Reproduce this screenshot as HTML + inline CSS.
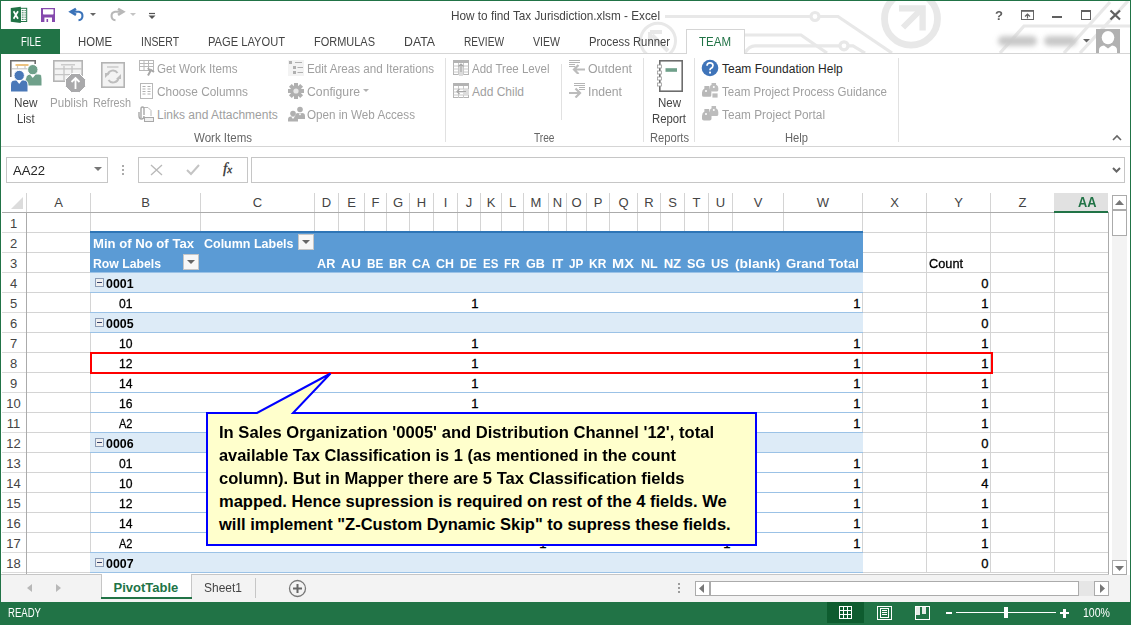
<!DOCTYPE html><html><head><meta charset="utf-8"><style>
html,body{margin:0;padding:0;}
body{width:1131px;height:625px;overflow:hidden;position:relative;background:#fff;font-family:"Liberation Sans",sans-serif;}
body>div{position:absolute;box-sizing:content-box;}
</style></head><body>
<svg style="position:absolute;left:620px;top:0px;" width="510" height="54" viewBox="0 0 510 54">
<g stroke="#e8e8e8" stroke-width="3.2" fill="none">
<path d="M45,16.5 L191,16.5"/><circle cx="195" cy="16.5" r="4"/><path d="M199,16.5 L218,16.5 L272,53"/>
<path d="M124,35 L181,35 L207,53"/>
<path d="M125,53 Q129,45.8 135,45.8 L220,45.8"/><circle cx="224" cy="45.8" r="4"/><path d="M228,45.8 L233,45.8 L245,53"/>
<circle cx="38" cy="40.8" r="17.5" stroke-width="3"/>
<path d="M48,51 L32,35 M30,32 L42,32 M30,32 L30,44" stroke-width="4"/>
<circle cx="291" cy="18.7" r="26.5" stroke-width="6.8"/>
<path d="M283,27.5 L302,8.5" stroke-width="6"/>
<path d="M279,8.3 L302.6,8.3 L302.6,30.5" stroke-width="6.3"/>
<path d="M380,53 L404,26 L510,26"/>
<path d="M444,53 L490,2"/><path d="M460,53 L508,1"/>
</g></svg>
<div style="left:0px;top:0px;width:1131px;height:1px;background:#217346;"></div>
<div style="left:0px;top:0px;width:1px;height:602px;background:#217346;"></div>
<div style="left:1130px;top:0px;width:1px;height:602px;background:#217346;"></div>
<div style="left:451.00px;top:9px;font-size:13px;line-height:13px;font-weight:normal;color:#444;white-space:nowrap;transform:scaleX(0.9050);transform-origin:0 0;">How to find Tax Jurisdiction.xlsm - Excel</div>
<svg style="position:absolute;left:10px;top:6px;" width="19" height="18" viewBox="0 0 19 18"><rect x="10.5" y="2.3" width="6.2" height="13.2" fill="#fff" stroke="#217346" stroke-width="1"/>
<path d="M11.8,4.6 H13.6 M14.5,4.6 H15.8 M11.8,6.8 H13.6 M14.5,6.8 H15.8 M11.8,9 H13.6 M14.5,9 H15.8 M11.8,11.2 H13.6 M14.5,11.2 H15.8 M11.8,13.4 H13.6 M14.5,13.4 H15.8" stroke="#217346" stroke-width="0.9"/>
<path d="M0.8,2 L10.8,0.8 L10.8,17 L0.8,15.8 Z" fill="#217346"/>
<path d="M3.6,5.2 L8,12.8 M8,5.2 L3.6,12.8" stroke="#fff" stroke-width="1.7"/></svg>
<svg style="position:absolute;left:41px;top:8px;" width="15" height="15" viewBox="0 0 15 15"><rect x="0" y="0" width="14" height="14" fill="#8549ad"/><path d="M2,1.3 H12.5 V5.8 Q12.5,6.5 11.8,6.5 H2.7 Q2,6.5 2,5.8 Z" fill="#fff"/><rect x="3.4" y="9.5" width="7.6" height="4.5" fill="#fff"/><rect x="5.5" y="11" width="1.6" height="3" fill="#8549ad"/></svg>
<svg style="position:absolute;left:66px;top:4px;" width="20" height="20" viewBox="0 0 20 20"><path d="M10,4.8 L4.9,7.8 L10,10.9" stroke="#3b73b9" stroke-width="2.7" fill="none" stroke-linejoin="miter"/><path d="M5.5,7.8 H13 A4.3,4.3 0 0 1 12.5,16.3" stroke="#3b73b9" stroke-width="2.1" fill="none"/></svg>
<svg style="position:absolute;left:90px;top:13px;" width="6" height="4" viewBox="0 0 6 4"><polygon points="0,0 6,0 3,3" fill="#666"/></svg>
<svg style="position:absolute;left:106px;top:4px;" width="20" height="20" viewBox="0 0 20 20"><path d="M12,4.8 L17.1,7.8 L12,10.9" stroke="#b8b8b8" stroke-width="2.7" fill="none"/><path d="M16.5,7.8 H9 A4.3,4.3 0 0 0 9.5,16.3" stroke="#b8b8b8" stroke-width="2.1" fill="none"/></svg>
<svg style="position:absolute;left:130px;top:13px;" width="6" height="4" viewBox="0 0 6 4"><polygon points="0,0 6,0 3,3" fill="#c4c4c4"/></svg>
<svg style="position:absolute;left:148px;top:12px;" width="8" height="8" viewBox="0 0 8 8"><path d="M1,1.5 H7" stroke="#555" stroke-width="1.2"/><polygon points="0.5,3.5 7.5,3.5 4,7" fill="#555"/></svg>
<div style="left:994.50px;top:9px;font-size:13px;line-height:13px;font-weight:bold;color:#606060;white-space:nowrap;transform:scaleX(1.0075);transform-origin:0 0;">?</div>
<svg style="position:absolute;left:1020px;top:9px;" width="15" height="12" viewBox="0 0 15 12"><rect x="1.5" y="1.5" width="12" height="9" stroke="#666" fill="none"/><path d="M1,2 H14" stroke="#666" stroke-width="1.6"/><path d="M7.5,9.5 V5 M5,7.5 L7.5,5 L10,7.5" stroke="#666" stroke-width="1.2" fill="none"/></svg>
<div style="left:1052px;top:16px;width:10px;height:2px;background:#606060;"></div>
<svg style="position:absolute;left:1080px;top:9px;" width="12" height="12" viewBox="0 0 12 12"><rect x="1.5" y="1.5" width="9" height="9" stroke="#606060" fill="none"/><rect x="1" y="1" width="10" height="2" fill="#606060"/></svg>
<svg style="position:absolute;left:1109px;top:9px;" width="13" height="12" viewBox="0 0 13 12"><path d="M1.5,1.5 L11,10.5 M11,1.5 L1.5,10.5" stroke="#606060" stroke-width="2.2"/></svg>
<div style="left:998px;top:36px;width:39px;height:10px;background:#c8c8c8;border-radius:5px;filter:blur(2.5px)"></div>
<div style="left:1044px;top:36px;width:33px;height:10px;background:#c8c8c8;border-radius:5px;filter:blur(2.5px)"></div>
<svg style="position:absolute;left:1083px;top:39px;" width="7" height="4" viewBox="0 0 7 4"><polygon points="0,0 7,0 3.5,3.5" fill="#666"/></svg>
<svg style="position:absolute;left:1096px;top:29px;" width="24" height="25" viewBox="0 0 24 25"><rect width="24" height="25" fill="#b1b1b1"/><ellipse cx="12" cy="8.6" rx="6.3" ry="6.6" fill="#fff"/><path d="M3,25 V21 Q3,17 8,16.5 L12,19.5 L16,16.5 Q21,17 21,21 V25 Z" fill="#fff"/></svg>
<div style="left:686px;top:29px;width:57px;height:24px;border:1px solid #d5d5d5;background:#fff;border-bottom:none;"></div>
<div style="left:90px;top:213px;width:1px;height:360px;background:#d4d4d4;"></div>
<div style="left:200px;top:213px;width:1px;height:360px;background:#d4d4d4;"></div>
<div style="left:314px;top:213px;width:1px;height:360px;background:#d4d4d4;"></div>
<div style="left:338px;top:213px;width:1px;height:360px;background:#d4d4d4;"></div>
<div style="left:364px;top:213px;width:1px;height:360px;background:#d4d4d4;"></div>
<div style="left:386px;top:213px;width:1px;height:360px;background:#d4d4d4;"></div>
<div style="left:409px;top:213px;width:1px;height:360px;background:#d4d4d4;"></div>
<div style="left:433px;top:213px;width:1px;height:360px;background:#d4d4d4;"></div>
<div style="left:457px;top:213px;width:1px;height:360px;background:#d4d4d4;"></div>
<div style="left:480px;top:213px;width:1px;height:360px;background:#d4d4d4;"></div>
<div style="left:501px;top:213px;width:1px;height:360px;background:#d4d4d4;"></div>
<div style="left:523px;top:213px;width:1px;height:360px;background:#d4d4d4;"></div>
<div style="left:548px;top:213px;width:1px;height:360px;background:#d4d4d4;"></div>
<div style="left:566px;top:213px;width:1px;height:360px;background:#d4d4d4;"></div>
<div style="left:586px;top:213px;width:1px;height:360px;background:#d4d4d4;"></div>
<div style="left:609px;top:213px;width:1px;height:360px;background:#d4d4d4;"></div>
<div style="left:637px;top:213px;width:1px;height:360px;background:#d4d4d4;"></div>
<div style="left:660px;top:213px;width:1px;height:360px;background:#d4d4d4;"></div>
<div style="left:684px;top:213px;width:1px;height:360px;background:#d4d4d4;"></div>
<div style="left:708px;top:213px;width:1px;height:360px;background:#d4d4d4;"></div>
<div style="left:732px;top:213px;width:1px;height:360px;background:#d4d4d4;"></div>
<div style="left:783px;top:213px;width:1px;height:360px;background:#d4d4d4;"></div>
<div style="left:862px;top:213px;width:1px;height:360px;background:#d4d4d4;"></div>
<div style="left:926px;top:213px;width:1px;height:360px;background:#d4d4d4;"></div>
<div style="left:990px;top:213px;width:1px;height:360px;background:#d4d4d4;"></div>
<div style="left:1054px;top:213px;width:1px;height:360px;background:#d4d4d4;"></div>
<div style="left:1108px;top:213px;width:1px;height:360px;background:#d4d4d4;"></div>
<div style="left:27px;top:232px;width:1082px;height:1px;background:#d4d4d4;"></div>
<div style="left:2px;top:232px;width:24px;height:1px;background:#dcdcdc;"></div>
<div style="left:27px;top:252px;width:1082px;height:1px;background:#d4d4d4;"></div>
<div style="left:2px;top:252px;width:24px;height:1px;background:#dcdcdc;"></div>
<div style="left:27px;top:272px;width:1082px;height:1px;background:#d4d4d4;"></div>
<div style="left:2px;top:272px;width:24px;height:1px;background:#dcdcdc;"></div>
<div style="left:27px;top:292px;width:1082px;height:1px;background:#d4d4d4;"></div>
<div style="left:2px;top:292px;width:24px;height:1px;background:#dcdcdc;"></div>
<div style="left:27px;top:312px;width:1082px;height:1px;background:#d4d4d4;"></div>
<div style="left:2px;top:312px;width:24px;height:1px;background:#dcdcdc;"></div>
<div style="left:27px;top:332px;width:1082px;height:1px;background:#d4d4d4;"></div>
<div style="left:2px;top:332px;width:24px;height:1px;background:#dcdcdc;"></div>
<div style="left:27px;top:352px;width:1082px;height:1px;background:#d4d4d4;"></div>
<div style="left:2px;top:352px;width:24px;height:1px;background:#dcdcdc;"></div>
<div style="left:27px;top:372px;width:1082px;height:1px;background:#d4d4d4;"></div>
<div style="left:2px;top:372px;width:24px;height:1px;background:#dcdcdc;"></div>
<div style="left:27px;top:392px;width:1082px;height:1px;background:#d4d4d4;"></div>
<div style="left:2px;top:392px;width:24px;height:1px;background:#dcdcdc;"></div>
<div style="left:27px;top:412px;width:1082px;height:1px;background:#d4d4d4;"></div>
<div style="left:2px;top:412px;width:24px;height:1px;background:#dcdcdc;"></div>
<div style="left:27px;top:432px;width:1082px;height:1px;background:#d4d4d4;"></div>
<div style="left:2px;top:432px;width:24px;height:1px;background:#dcdcdc;"></div>
<div style="left:27px;top:452px;width:1082px;height:1px;background:#d4d4d4;"></div>
<div style="left:2px;top:452px;width:24px;height:1px;background:#dcdcdc;"></div>
<div style="left:27px;top:472px;width:1082px;height:1px;background:#d4d4d4;"></div>
<div style="left:2px;top:472px;width:24px;height:1px;background:#dcdcdc;"></div>
<div style="left:27px;top:492px;width:1082px;height:1px;background:#d4d4d4;"></div>
<div style="left:2px;top:492px;width:24px;height:1px;background:#dcdcdc;"></div>
<div style="left:27px;top:512px;width:1082px;height:1px;background:#d4d4d4;"></div>
<div style="left:2px;top:512px;width:24px;height:1px;background:#dcdcdc;"></div>
<div style="left:27px;top:532px;width:1082px;height:1px;background:#d4d4d4;"></div>
<div style="left:2px;top:532px;width:24px;height:1px;background:#dcdcdc;"></div>
<div style="left:27px;top:552px;width:1082px;height:1px;background:#d4d4d4;"></div>
<div style="left:2px;top:552px;width:24px;height:1px;background:#dcdcdc;"></div>
<div style="left:27px;top:572px;width:1082px;height:1px;background:#d4d4d4;"></div>
<div style="left:2px;top:572px;width:24px;height:1px;background:#dcdcdc;"></div>
<div style="left:90px;top:193px;width:1px;height:19px;background:#d4d4d4;"></div>
<div style="left:200px;top:193px;width:1px;height:19px;background:#d4d4d4;"></div>
<div style="left:314px;top:193px;width:1px;height:19px;background:#d4d4d4;"></div>
<div style="left:338px;top:193px;width:1px;height:19px;background:#d4d4d4;"></div>
<div style="left:364px;top:193px;width:1px;height:19px;background:#d4d4d4;"></div>
<div style="left:386px;top:193px;width:1px;height:19px;background:#d4d4d4;"></div>
<div style="left:409px;top:193px;width:1px;height:19px;background:#d4d4d4;"></div>
<div style="left:433px;top:193px;width:1px;height:19px;background:#d4d4d4;"></div>
<div style="left:457px;top:193px;width:1px;height:19px;background:#d4d4d4;"></div>
<div style="left:480px;top:193px;width:1px;height:19px;background:#d4d4d4;"></div>
<div style="left:501px;top:193px;width:1px;height:19px;background:#d4d4d4;"></div>
<div style="left:523px;top:193px;width:1px;height:19px;background:#d4d4d4;"></div>
<div style="left:548px;top:193px;width:1px;height:19px;background:#d4d4d4;"></div>
<div style="left:566px;top:193px;width:1px;height:19px;background:#d4d4d4;"></div>
<div style="left:586px;top:193px;width:1px;height:19px;background:#d4d4d4;"></div>
<div style="left:609px;top:193px;width:1px;height:19px;background:#d4d4d4;"></div>
<div style="left:637px;top:193px;width:1px;height:19px;background:#d4d4d4;"></div>
<div style="left:660px;top:193px;width:1px;height:19px;background:#d4d4d4;"></div>
<div style="left:684px;top:193px;width:1px;height:19px;background:#d4d4d4;"></div>
<div style="left:708px;top:193px;width:1px;height:19px;background:#d4d4d4;"></div>
<div style="left:732px;top:193px;width:1px;height:19px;background:#d4d4d4;"></div>
<div style="left:783px;top:193px;width:1px;height:19px;background:#d4d4d4;"></div>
<div style="left:862px;top:193px;width:1px;height:19px;background:#d4d4d4;"></div>
<div style="left:926px;top:193px;width:1px;height:19px;background:#d4d4d4;"></div>
<div style="left:990px;top:193px;width:1px;height:19px;background:#d4d4d4;"></div>
<div style="left:1054px;top:193px;width:1px;height:19px;background:#d4d4d4;"></div>
<div style="left:1054px;top:193px;width:54px;height:18px;background:#e1e1e1;"></div>
<div style="left:1054px;top:211px;width:54px;height:2px;background:#217346;"></div>
<div style="left:2px;top:212px;width:1052px;height:1px;background:#ababab;"></div>
<div style="left:26px;top:213px;width:1px;height:361px;background:#ababab;"></div>
<svg style="position:absolute;left:11px;top:197px;" width="13" height="12" viewBox="0 0 13 12"><polygon points="12,0 12,12 0,12" fill="#dcdcdc"/></svg>
<div style="left:26px;top:193px;width:1px;height:19px;background:#d4d4d4;"></div>
<div style="left:54.16px;top:196px;font-size:13px;line-height:13px;font-weight:normal;color:#444;white-space:nowrap;">A</div>
<div style="left:141.16px;top:196px;font-size:13px;line-height:13px;font-weight:normal;color:#444;white-space:nowrap;">B</div>
<div style="left:252.81px;top:196px;font-size:13px;line-height:13px;font-weight:normal;color:#444;white-space:nowrap;">C</div>
<div style="left:321.81px;top:196px;font-size:13px;line-height:13px;font-weight:normal;color:#444;white-space:nowrap;">D</div>
<div style="left:347.16px;top:196px;font-size:13px;line-height:13px;font-weight:normal;color:#444;white-space:nowrap;">E</div>
<div style="left:371.53px;top:196px;font-size:13px;line-height:13px;font-weight:normal;color:#444;white-space:nowrap;">F</div>
<div style="left:392.94px;top:196px;font-size:13px;line-height:13px;font-weight:normal;color:#444;white-space:nowrap;">G</div>
<div style="left:416.81px;top:196px;font-size:13px;line-height:13px;font-weight:normal;color:#444;white-space:nowrap;">H</div>
<div style="left:443.69px;top:196px;font-size:13px;line-height:13px;font-weight:normal;color:#444;white-space:nowrap;">I</div>
<div style="left:465.75px;top:196px;font-size:13px;line-height:13px;font-weight:normal;color:#444;white-space:nowrap;">J</div>
<div style="left:486.66px;top:196px;font-size:13px;line-height:13px;font-weight:normal;color:#444;white-space:nowrap;">K</div>
<div style="left:508.89px;top:196px;font-size:13px;line-height:13px;font-weight:normal;color:#444;white-space:nowrap;">L</div>
<div style="left:530.59px;top:196px;font-size:13px;line-height:13px;font-weight:normal;color:#444;white-space:nowrap;">M</div>
<div style="left:552.81px;top:196px;font-size:13px;line-height:13px;font-weight:normal;color:#444;white-space:nowrap;">N</div>
<div style="left:571.44px;top:196px;font-size:13px;line-height:13px;font-weight:normal;color:#444;white-space:nowrap;">O</div>
<div style="left:593.66px;top:196px;font-size:13px;line-height:13px;font-weight:normal;color:#444;white-space:nowrap;">P</div>
<div style="left:618.44px;top:196px;font-size:13px;line-height:13px;font-weight:normal;color:#444;white-space:nowrap;">Q</div>
<div style="left:644.31px;top:196px;font-size:13px;line-height:13px;font-weight:normal;color:#444;white-space:nowrap;">R</div>
<div style="left:668.16px;top:196px;font-size:13px;line-height:13px;font-weight:normal;color:#444;white-space:nowrap;">S</div>
<div style="left:692.53px;top:196px;font-size:13px;line-height:13px;font-weight:normal;color:#444;white-space:nowrap;">T</div>
<div style="left:715.81px;top:196px;font-size:13px;line-height:13px;font-weight:normal;color:#444;white-space:nowrap;">U</div>
<div style="left:753.66px;top:196px;font-size:13px;line-height:13px;font-weight:normal;color:#444;white-space:nowrap;">V</div>
<div style="left:816.86px;top:196px;font-size:13px;line-height:13px;font-weight:normal;color:#444;white-space:nowrap;">W</div>
<div style="left:890.16px;top:196px;font-size:13px;line-height:13px;font-weight:normal;color:#444;white-space:nowrap;">X</div>
<div style="left:954.16px;top:196px;font-size:13px;line-height:13px;font-weight:normal;color:#444;white-space:nowrap;">Y</div>
<div style="left:1018.53px;top:196px;font-size:13px;line-height:13px;font-weight:normal;color:#444;white-space:nowrap;">Z</div>
<div style="left:1078.00px;top:195px;font-size:14px;line-height:14px;font-weight:bold;color:#217346;white-space:nowrap;transform:scaleX(0.9149);transform-origin:0 0;">AA</div>
<div style="left:9.89px;top:217px;font-size:13px;line-height:13px;font-weight:normal;color:#444;white-space:nowrap;">1</div>
<div style="left:9.89px;top:237px;font-size:13px;line-height:13px;font-weight:normal;color:#444;white-space:nowrap;">2</div>
<div style="left:9.89px;top:257px;font-size:13px;line-height:13px;font-weight:normal;color:#444;white-space:nowrap;">3</div>
<div style="left:9.89px;top:277px;font-size:13px;line-height:13px;font-weight:normal;color:#444;white-space:nowrap;">4</div>
<div style="left:9.89px;top:297px;font-size:13px;line-height:13px;font-weight:normal;color:#444;white-space:nowrap;">5</div>
<div style="left:9.89px;top:317px;font-size:13px;line-height:13px;font-weight:normal;color:#444;white-space:nowrap;">6</div>
<div style="left:9.89px;top:337px;font-size:13px;line-height:13px;font-weight:normal;color:#444;white-space:nowrap;">7</div>
<div style="left:9.89px;top:357px;font-size:13px;line-height:13px;font-weight:normal;color:#444;white-space:nowrap;">8</div>
<div style="left:9.89px;top:377px;font-size:13px;line-height:13px;font-weight:normal;color:#444;white-space:nowrap;">9</div>
<div style="left:6.27px;top:397px;font-size:13px;line-height:13px;font-weight:normal;color:#444;white-space:nowrap;">10</div>
<div style="left:6.75px;top:417px;font-size:13px;line-height:13px;font-weight:normal;color:#444;white-space:nowrap;">11</div>
<div style="left:6.27px;top:437px;font-size:13px;line-height:13px;font-weight:normal;color:#444;white-space:nowrap;">12</div>
<div style="left:6.27px;top:457px;font-size:13px;line-height:13px;font-weight:normal;color:#444;white-space:nowrap;">13</div>
<div style="left:6.27px;top:477px;font-size:13px;line-height:13px;font-weight:normal;color:#444;white-space:nowrap;">14</div>
<div style="left:6.27px;top:497px;font-size:13px;line-height:13px;font-weight:normal;color:#444;white-space:nowrap;">15</div>
<div style="left:6.27px;top:517px;font-size:13px;line-height:13px;font-weight:normal;color:#444;white-space:nowrap;">16</div>
<div style="left:6.27px;top:537px;font-size:13px;line-height:13px;font-weight:normal;color:#444;white-space:nowrap;">17</div>
<div style="left:6.27px;top:557px;font-size:13px;line-height:13px;font-weight:normal;color:#444;white-space:nowrap;">18</div>
<div style="left:1px;top:574px;width:1108px;height:1px;background:#c6c6c6;"></div>
<div style="left:90px;top:231px;width:773px;height:2px;background:#2e75b6;"></div>
<div style="left:90px;top:233px;width:773px;height:39px;background:#5b9bd5;"></div>
<div style="left:90px;top:272px;width:773px;height:1px;background:#9bc2e6;"></div>
<div style="left:91px;top:273px;width:771px;height:300px;background:#fff;"></div>
<div style="left:93.00px;top:237px;font-size:13px;line-height:13px;font-weight:bold;color:#fff;white-space:nowrap;transform:scaleX(1.0087);transform-origin:0 0;">Min of No of Tax</div>
<div style="left:203.50px;top:237px;font-size:13px;line-height:13px;font-weight:bold;color:#fff;white-space:nowrap;transform:scaleX(0.9606);transform-origin:0 0;">Column Labels</div>
<div style="left:93.00px;top:257px;font-size:13px;line-height:13px;font-weight:bold;color:#fff;white-space:nowrap;transform:scaleX(0.9414);transform-origin:0 0;">Row Labels</div>
<div style="left:183px;top:254px;width:14px;height:14px;border:1px solid #c6c6c6;background:#f7f7f7;"></div>
<svg style="position:absolute;left:187px;top:260px;" width="8" height="5" viewBox="0 0 8 5"><polygon points="0,0 8,0 4,4" fill="#666"/></svg>
<div style="left:298px;top:234px;width:14px;height:14px;border:1px solid #c6c6c6;background:#f7f7f7;"></div>
<svg style="position:absolute;left:302px;top:240px;" width="8" height="5" viewBox="0 0 8 5"><polygon points="0,0 8,0 4,4" fill="#666"/></svg>
<div style="left:316.70px;top:257px;font-size:13px;line-height:13px;font-weight:bold;color:#fff;white-space:nowrap;transform:scaleX(0.9746);transform-origin:0 0;">AR</div>
<div style="left:340.70px;top:257px;font-size:13px;line-height:13px;font-weight:bold;color:#fff;white-space:nowrap;transform:scaleX(1.0598);transform-origin:0 0;">AU</div>
<div style="left:366.70px;top:257px;font-size:13px;line-height:13px;font-weight:bold;color:#fff;white-space:nowrap;transform:scaleX(0.9026);transform-origin:0 0;">BE</div>
<div style="left:388.70px;top:257px;font-size:13px;line-height:13px;font-weight:bold;color:#fff;white-space:nowrap;transform:scaleX(0.9213);transform-origin:0 0;">BR</div>
<div style="left:411.70px;top:257px;font-size:13px;line-height:13px;font-weight:bold;color:#fff;white-space:nowrap;transform:scaleX(0.9746);transform-origin:0 0;">CA</div>
<div style="left:435.70px;top:257px;font-size:13px;line-height:13px;font-weight:bold;color:#fff;white-space:nowrap;transform:scaleX(0.9533);transform-origin:0 0;">CH</div>
<div style="left:460.30px;top:257px;font-size:13px;line-height:13px;font-weight:bold;color:#fff;white-space:nowrap;transform:scaleX(0.9247);transform-origin:0 0;">DE</div>
<div style="left:483.30px;top:257px;font-size:13px;line-height:13px;font-weight:bold;color:#fff;white-space:nowrap;transform:scaleX(0.8822);transform-origin:0 0;">ES</div>
<div style="left:504.30px;top:257px;font-size:13px;line-height:13px;font-weight:bold;color:#fff;white-space:nowrap;transform:scaleX(0.9060);transform-origin:0 0;">FR</div>
<div style="left:526.10px;top:257px;font-size:13px;line-height:13px;font-weight:bold;color:#fff;white-space:nowrap;transform:scaleX(0.9692);transform-origin:0 0;">GB</div>
<div style="left:551.70px;top:257px;font-size:13px;line-height:13px;font-weight:bold;color:#fff;white-space:nowrap;transform:scaleX(0.9782);transform-origin:0 0;">IT</div>
<div style="left:568.70px;top:257px;font-size:13px;line-height:13px;font-weight:bold;color:#fff;white-space:nowrap;transform:scaleX(0.8993);transform-origin:0 0;">JP</div>
<div style="left:589.30px;top:257px;font-size:13px;line-height:13px;font-weight:bold;color:#fff;white-space:nowrap;transform:scaleX(0.9213);transform-origin:0 0;">KR</div>
<div style="left:612.10px;top:257px;font-size:13px;line-height:13px;font-weight:bold;color:#fff;white-space:nowrap;transform:scaleX(1.1231);transform-origin:0 0;">MX</div>
<div style="left:640.70px;top:257px;font-size:13px;line-height:13px;font-weight:bold;color:#fff;white-space:nowrap;transform:scaleX(0.9637);transform-origin:0 0;">NL</div>
<div style="left:663.70px;top:257px;font-size:13px;line-height:13px;font-weight:bold;color:#fff;white-space:nowrap;">NZ</div>
<div style="left:686.70px;top:257px;font-size:13px;line-height:13px;font-weight:bold;color:#fff;white-space:nowrap;transform:scaleX(0.9743);transform-origin:0 0;">SG</div>
<div style="left:711.30px;top:257px;font-size:13px;line-height:13px;font-weight:bold;color:#fff;white-space:nowrap;transform:scaleX(0.9801);transform-origin:0 0;">US</div>
<div style="left:734.70px;top:257px;font-size:13px;line-height:13px;font-weight:bold;color:#fff;white-space:nowrap;transform:scaleX(1.0632);transform-origin:0 0;">(blank)</div>
<div style="left:786.10px;top:257px;font-size:13px;line-height:13px;font-weight:bold;color:#fff;white-space:nowrap;transform:scaleX(1.0128);transform-origin:0 0;">Grand Total</div>
<div style="left:90px;top:273px;width:773px;height:19px;background:#ddebf7;"></div>
<div style="left:90px;top:292px;width:773px;height:1px;background:#9bc2e6;"></div>
<div style="left:90px;top:312px;width:773px;height:1px;background:#9bc2e6;"></div>
<div style="left:90px;top:313px;width:773px;height:19px;background:#ddebf7;"></div>
<div style="left:90px;top:332px;width:773px;height:1px;background:#9bc2e6;"></div>
<div style="left:90px;top:352px;width:773px;height:1px;background:#9bc2e6;"></div>
<div style="left:90px;top:372px;width:773px;height:1px;background:#9bc2e6;"></div>
<div style="left:90px;top:392px;width:773px;height:1px;background:#9bc2e6;"></div>
<div style="left:90px;top:412px;width:773px;height:1px;background:#9bc2e6;"></div>
<div style="left:90px;top:432px;width:773px;height:1px;background:#9bc2e6;"></div>
<div style="left:90px;top:433px;width:773px;height:19px;background:#ddebf7;"></div>
<div style="left:90px;top:452px;width:773px;height:1px;background:#9bc2e6;"></div>
<div style="left:90px;top:472px;width:773px;height:1px;background:#9bc2e6;"></div>
<div style="left:90px;top:492px;width:773px;height:1px;background:#9bc2e6;"></div>
<div style="left:90px;top:512px;width:773px;height:1px;background:#9bc2e6;"></div>
<div style="left:90px;top:532px;width:773px;height:1px;background:#9bc2e6;"></div>
<div style="left:90px;top:552px;width:773px;height:1px;background:#9bc2e6;"></div>
<div style="left:90px;top:553px;width:773px;height:19px;background:#ddebf7;"></div>
<div style="left:90px;top:572px;width:773px;height:1px;background:#9bc2e6;"></div>
<div style="left:95px;top:278px;width:7px;height:7px;border:1px solid #8a9bb5;background:#f0f0f0;"></div>
<div style="left:97px;top:282px;width:5px;height:1px;background:#33406b;"></div>
<div style="left:106.00px;top:277px;font-size:13px;line-height:13px;font-weight:bold;color:#000;white-space:nowrap;transform:scaleX(0.9510);transform-origin:0 0;">0001</div>
<div style="left:95px;top:318px;width:7px;height:7px;border:1px solid #8a9bb5;background:#f0f0f0;"></div>
<div style="left:97px;top:322px;width:5px;height:1px;background:#33406b;"></div>
<div style="left:106.00px;top:317px;font-size:13px;line-height:13px;font-weight:bold;color:#000;white-space:nowrap;transform:scaleX(0.9510);transform-origin:0 0;">0005</div>
<div style="left:95px;top:438px;width:7px;height:7px;border:1px solid #8a9bb5;background:#f0f0f0;"></div>
<div style="left:97px;top:442px;width:5px;height:1px;background:#33406b;"></div>
<div style="left:106.00px;top:437px;font-size:13px;line-height:13px;font-weight:bold;color:#000;white-space:nowrap;transform:scaleX(0.9510);transform-origin:0 0;">0006</div>
<div style="left:95px;top:558px;width:7px;height:7px;border:1px solid #8a9bb5;background:#f0f0f0;"></div>
<div style="left:97px;top:562px;width:5px;height:1px;background:#33406b;"></div>
<div style="left:106.00px;top:557px;font-size:13px;line-height:13px;font-weight:bold;color:#000;white-space:nowrap;transform:scaleX(0.9510);transform-origin:0 0;">0007</div>
<div style="left:119.00px;top:297px;font-size:13px;line-height:13px;font-weight:normal;color:#000;white-space:nowrap;transform:scaleX(0.9337);transform-origin:0 0;-webkit-text-stroke:0.3px #000;">01</div>
<div style="left:119.00px;top:337px;font-size:13px;line-height:13px;font-weight:normal;color:#000;white-space:nowrap;transform:scaleX(0.9337);transform-origin:0 0;-webkit-text-stroke:0.3px #000;">10</div>
<div style="left:119.00px;top:357px;font-size:13px;line-height:13px;font-weight:normal;color:#000;white-space:nowrap;transform:scaleX(0.9337);transform-origin:0 0;-webkit-text-stroke:0.3px #000;">12</div>
<div style="left:119.00px;top:377px;font-size:13px;line-height:13px;font-weight:normal;color:#000;white-space:nowrap;transform:scaleX(0.9337);transform-origin:0 0;-webkit-text-stroke:0.3px #000;">14</div>
<div style="left:119.00px;top:397px;font-size:13px;line-height:13px;font-weight:normal;color:#000;white-space:nowrap;transform:scaleX(0.9337);transform-origin:0 0;-webkit-text-stroke:0.3px #000;">16</div>
<div style="left:119.00px;top:417px;font-size:13px;line-height:13px;font-weight:normal;color:#000;white-space:nowrap;transform:scaleX(0.8490);transform-origin:0 0;-webkit-text-stroke:0.3px #000;">A2</div>
<div style="left:119.00px;top:457px;font-size:13px;line-height:13px;font-weight:normal;color:#000;white-space:nowrap;transform:scaleX(0.9337);transform-origin:0 0;-webkit-text-stroke:0.3px #000;">01</div>
<div style="left:119.00px;top:477px;font-size:13px;line-height:13px;font-weight:normal;color:#000;white-space:nowrap;transform:scaleX(0.9337);transform-origin:0 0;-webkit-text-stroke:0.3px #000;">10</div>
<div style="left:119.00px;top:497px;font-size:13px;line-height:13px;font-weight:normal;color:#000;white-space:nowrap;transform:scaleX(0.9337);transform-origin:0 0;-webkit-text-stroke:0.3px #000;">12</div>
<div style="left:119.00px;top:517px;font-size:13px;line-height:13px;font-weight:normal;color:#000;white-space:nowrap;transform:scaleX(0.9337);transform-origin:0 0;-webkit-text-stroke:0.3px #000;">14</div>
<div style="left:119.00px;top:537px;font-size:13px;line-height:13px;font-weight:normal;color:#000;white-space:nowrap;transform:scaleX(0.8490);transform-origin:0 0;-webkit-text-stroke:0.3px #000;">A2</div>
<div style="left:471.27px;top:297px;font-size:13px;line-height:13px;font-weight:normal;color:#000;white-space:nowrap;-webkit-text-stroke:0.3px #000;">1</div>
<div style="left:471.27px;top:337px;font-size:13px;line-height:13px;font-weight:normal;color:#000;white-space:nowrap;-webkit-text-stroke:0.3px #000;">1</div>
<div style="left:471.27px;top:357px;font-size:13px;line-height:13px;font-weight:normal;color:#000;white-space:nowrap;-webkit-text-stroke:0.3px #000;">1</div>
<div style="left:471.27px;top:377px;font-size:13px;line-height:13px;font-weight:normal;color:#000;white-space:nowrap;-webkit-text-stroke:0.3px #000;">1</div>
<div style="left:471.27px;top:397px;font-size:13px;line-height:13px;font-weight:normal;color:#000;white-space:nowrap;-webkit-text-stroke:0.3px #000;">1</div>
<div style="left:471.27px;top:417px;font-size:13px;line-height:13px;font-weight:normal;color:#000;white-space:nowrap;-webkit-text-stroke:0.3px #000;">1</div>
<div style="left:853.27px;top:297px;font-size:13px;line-height:13px;font-weight:normal;color:#000;white-space:nowrap;-webkit-text-stroke:0.3px #000;">1</div>
<div style="left:853.27px;top:337px;font-size:13px;line-height:13px;font-weight:normal;color:#000;white-space:nowrap;-webkit-text-stroke:0.3px #000;">1</div>
<div style="left:853.27px;top:357px;font-size:13px;line-height:13px;font-weight:normal;color:#000;white-space:nowrap;-webkit-text-stroke:0.3px #000;">1</div>
<div style="left:853.27px;top:377px;font-size:13px;line-height:13px;font-weight:normal;color:#000;white-space:nowrap;-webkit-text-stroke:0.3px #000;">1</div>
<div style="left:853.27px;top:397px;font-size:13px;line-height:13px;font-weight:normal;color:#000;white-space:nowrap;-webkit-text-stroke:0.3px #000;">1</div>
<div style="left:853.27px;top:417px;font-size:13px;line-height:13px;font-weight:normal;color:#000;white-space:nowrap;-webkit-text-stroke:0.3px #000;">1</div>
<div style="left:853.27px;top:457px;font-size:13px;line-height:13px;font-weight:normal;color:#000;white-space:nowrap;-webkit-text-stroke:0.3px #000;">1</div>
<div style="left:853.27px;top:477px;font-size:13px;line-height:13px;font-weight:normal;color:#000;white-space:nowrap;-webkit-text-stroke:0.3px #000;">1</div>
<div style="left:853.27px;top:497px;font-size:13px;line-height:13px;font-weight:normal;color:#000;white-space:nowrap;-webkit-text-stroke:0.3px #000;">1</div>
<div style="left:853.27px;top:517px;font-size:13px;line-height:13px;font-weight:normal;color:#000;white-space:nowrap;-webkit-text-stroke:0.3px #000;">1</div>
<div style="left:853.27px;top:537px;font-size:13px;line-height:13px;font-weight:normal;color:#000;white-space:nowrap;-webkit-text-stroke:0.3px #000;">1</div>
<div style="left:539.27px;top:537px;font-size:13px;line-height:13px;font-weight:normal;color:#000;white-space:nowrap;-webkit-text-stroke:0.3px #000;">1</div>
<div style="left:723.27px;top:537px;font-size:13px;line-height:13px;font-weight:normal;color:#000;white-space:nowrap;-webkit-text-stroke:0.3px #000;">1</div>
<div style="left:981.27px;top:277px;font-size:13px;line-height:13px;font-weight:normal;color:#000;white-space:nowrap;-webkit-text-stroke:0.3px #000;">0</div>
<div style="left:981.27px;top:297px;font-size:13px;line-height:13px;font-weight:normal;color:#000;white-space:nowrap;-webkit-text-stroke:0.3px #000;">1</div>
<div style="left:981.27px;top:317px;font-size:13px;line-height:13px;font-weight:normal;color:#000;white-space:nowrap;-webkit-text-stroke:0.3px #000;">0</div>
<div style="left:981.27px;top:337px;font-size:13px;line-height:13px;font-weight:normal;color:#000;white-space:nowrap;-webkit-text-stroke:0.3px #000;">1</div>
<div style="left:981.27px;top:357px;font-size:13px;line-height:13px;font-weight:normal;color:#000;white-space:nowrap;-webkit-text-stroke:0.3px #000;">1</div>
<div style="left:981.27px;top:377px;font-size:13px;line-height:13px;font-weight:normal;color:#000;white-space:nowrap;-webkit-text-stroke:0.3px #000;">1</div>
<div style="left:981.27px;top:397px;font-size:13px;line-height:13px;font-weight:normal;color:#000;white-space:nowrap;-webkit-text-stroke:0.3px #000;">1</div>
<div style="left:981.27px;top:417px;font-size:13px;line-height:13px;font-weight:normal;color:#000;white-space:nowrap;-webkit-text-stroke:0.3px #000;">1</div>
<div style="left:981.27px;top:437px;font-size:13px;line-height:13px;font-weight:normal;color:#000;white-space:nowrap;-webkit-text-stroke:0.3px #000;">0</div>
<div style="left:981.27px;top:457px;font-size:13px;line-height:13px;font-weight:normal;color:#000;white-space:nowrap;-webkit-text-stroke:0.3px #000;">1</div>
<div style="left:981.27px;top:477px;font-size:13px;line-height:13px;font-weight:normal;color:#000;white-space:nowrap;-webkit-text-stroke:0.3px #000;">4</div>
<div style="left:981.27px;top:497px;font-size:13px;line-height:13px;font-weight:normal;color:#000;white-space:nowrap;-webkit-text-stroke:0.3px #000;">1</div>
<div style="left:981.27px;top:517px;font-size:13px;line-height:13px;font-weight:normal;color:#000;white-space:nowrap;-webkit-text-stroke:0.3px #000;">1</div>
<div style="left:981.27px;top:537px;font-size:13px;line-height:13px;font-weight:normal;color:#000;white-space:nowrap;-webkit-text-stroke:0.3px #000;">1</div>
<div style="left:981.27px;top:557px;font-size:13px;line-height:13px;font-weight:normal;color:#000;white-space:nowrap;-webkit-text-stroke:0.3px #000;">0</div>
<div style="left:929.00px;top:257px;font-size:13px;line-height:13px;font-weight:normal;color:#000;white-space:nowrap;transform:scaleX(0.9802);transform-origin:0 0;-webkit-text-stroke:0.3px #000;">Count</div>
<div style="left:90px;top:352px;width:899px;height:18px;border:2px solid #ff0000;background:transparent;"></div>
<div style="left:6px;top:157px;width:100px;height:24px;border:1px solid #c6c6c6;background:#fff;"></div>
<div style="left:13.00px;top:164px;font-size:13px;line-height:13px;font-weight:normal;color:#262626;white-space:nowrap;transform:scaleX(1.0062);transform-origin:0 0;">AA22</div>
<svg style="position:absolute;left:94px;top:167px;" width="8" height="5" viewBox="0 0 8 5"><polygon points="0,0 8,0 4,4" fill="#777"/></svg>
<div style="left:122px;top:165px;width:2px;height:2px;background:#ababab;"></div>
<div style="left:122px;top:169px;width:2px;height:2px;background:#ababab;"></div>
<div style="left:122px;top:173px;width:2px;height:2px;background:#ababab;"></div>
<div style="left:138px;top:157px;width:108px;height:24px;border:1px solid #c6c6c6;background:#fff;"></div>
<svg style="position:absolute;left:150px;top:164px;" width="13" height="12" viewBox="0 0 13 12"><path d="M1,1 L12,11 M12,1 L1,11" stroke="#b8b8b8" stroke-width="1.3" fill="none"/></svg>
<svg style="position:absolute;left:186px;top:164px;" width="14" height="12" viewBox="0 0 14 12"><path d="M1,6 L5,10 L13,1" stroke="#c4c4c4" stroke-width="2" fill="none"/></svg>
<div style="left:223px;top:161px;font-family:'Liberation Serif',serif;font-style:italic;font-size:15px;line-height:15px;color:#333;-webkit-text-stroke:0.3px #333;">f<span style="font-size:11px">x</span></div>
<div style="left:251px;top:157px;width:872px;height:24px;border:1px solid #c6c6c6;background:#fff;"></div>
<svg style="position:absolute;left:1112px;top:167px;" width="9" height="6" viewBox="0 0 9 6"><path d="M1,1 L4.5,4.5 L8,1" stroke="#666" stroke-width="2" fill="none"/></svg>
<div style="left:1px;top:146px;width:1129px;height:1px;background:#d5d5d5;"></div>
<div style="left:14.25px;top:97px;font-size:12px;line-height:12px;font-weight:normal;color:#444;white-space:nowrap;transform:scaleX(0.9789);transform-origin:0 0;">New</div>
<div style="left:17.25px;top:113px;font-size:12px;line-height:12px;font-weight:normal;color:#444;white-space:nowrap;transform:scaleX(0.9372);transform-origin:0 0;">List</div>
<div style="left:49.50px;top:97px;font-size:12px;line-height:12px;font-weight:normal;color:#a0a0a0;white-space:nowrap;transform:scaleX(0.9655);transform-origin:0 0;">Publish</div>
<div style="left:93.00px;top:97px;font-size:12px;line-height:12px;font-weight:normal;color:#a0a0a0;white-space:nowrap;transform:scaleX(0.9044);transform-origin:0 0;">Refresh</div>
<div style="left:157.00px;top:63px;font-size:12px;line-height:12px;font-weight:normal;color:#a0a0a0;white-space:nowrap;transform:scaleX(0.9685);transform-origin:0 0;">Get Work Items</div>
<div style="left:157.00px;top:86px;font-size:12px;line-height:12px;font-weight:normal;color:#a0a0a0;white-space:nowrap;transform:scaleX(0.9887);transform-origin:0 0;">Choose Columns</div>
<div style="left:157.00px;top:109px;font-size:12px;line-height:12px;font-weight:normal;color:#a0a0a0;white-space:nowrap;">Links and Attachments</div>
<div style="left:193.50px;top:132px;font-size:12px;line-height:12px;font-weight:normal;color:#666;white-space:nowrap;transform:scaleX(0.9595);transform-origin:0 0;">Work Items</div>
<div style="left:307.00px;top:63px;font-size:12px;line-height:12px;font-weight:normal;color:#a0a0a0;white-space:nowrap;transform:scaleX(0.9714);transform-origin:0 0;">Edit Areas and Iterations</div>
<div style="left:307.00px;top:86px;font-size:12px;line-height:12px;font-weight:normal;color:#a0a0a0;white-space:nowrap;transform:scaleX(1.0187);transform-origin:0 0;">Configure</div>
<svg style="position:absolute;left:363px;top:89px;" width="6" height="4" viewBox="0 0 6 4"><polygon points="0,0 6,0 3,3" fill="#b0b0b0"/></svg>
<div style="left:307.00px;top:109px;font-size:12px;line-height:12px;font-weight:normal;color:#a0a0a0;white-space:nowrap;transform:scaleX(0.9715);transform-origin:0 0;">Open in Web Access</div>
<div style="left:445px;top:58px;width:1px;height:84px;background:#e1e1e1;"></div>
<div style="left:472.00px;top:63px;font-size:12px;line-height:12px;font-weight:normal;color:#a0a0a0;white-space:nowrap;transform:scaleX(0.9602);transform-origin:0 0;">Add Tree Level</div>
<div style="left:472.00px;top:86px;font-size:12px;line-height:12px;font-weight:normal;color:#a0a0a0;white-space:nowrap;">Add Child</div>
<div style="left:561px;top:64px;width:1px;height:56px;background:#e1e1e1;"></div>
<div style="left:588.00px;top:63px;font-size:12px;line-height:12px;font-weight:normal;color:#a0a0a0;white-space:nowrap;transform:scaleX(1.0306);transform-origin:0 0;">Outdent</div>
<div style="left:588.00px;top:86px;font-size:12px;line-height:12px;font-weight:normal;color:#a0a0a0;white-space:nowrap;transform:scaleX(1.0192);transform-origin:0 0;">Indent</div>
<div style="left:534.25px;top:132px;font-size:12px;line-height:12px;font-weight:normal;color:#666;white-space:nowrap;transform:scaleX(0.8462);transform-origin:0 0;">Tree</div>
<div style="left:643px;top:58px;width:1px;height:84px;background:#e1e1e1;"></div>
<div style="left:657.50px;top:97px;font-size:12px;line-height:12px;font-weight:normal;color:#444;white-space:nowrap;transform:scaleX(0.9581);transform-origin:0 0;">New</div>
<div style="left:652.00px;top:113px;font-size:12px;line-height:12px;font-weight:normal;color:#444;white-space:nowrap;transform:scaleX(0.9441);transform-origin:0 0;">Report</div>
<div style="left:649.50px;top:132px;font-size:12px;line-height:12px;font-weight:normal;color:#666;white-space:nowrap;transform:scaleX(0.9282);transform-origin:0 0;">Reports</div>
<div style="left:694px;top:58px;width:1px;height:84px;background:#e1e1e1;"></div>
<div style="left:722.00px;top:63px;font-size:12px;line-height:12px;font-weight:normal;color:#262626;white-space:nowrap;">Team Foundation Help</div>
<div style="left:722.00px;top:86px;font-size:12px;line-height:12px;font-weight:normal;color:#a0a0a0;white-space:nowrap;transform:scaleX(0.9627);transform-origin:0 0;">Team Project Process Guidance</div>
<div style="left:722.00px;top:109px;font-size:12px;line-height:12px;font-weight:normal;color:#a0a0a0;white-space:nowrap;transform:scaleX(0.9837);transform-origin:0 0;">Team Project Portal</div>
<div style="left:784.50px;top:132px;font-size:12px;line-height:12px;font-weight:normal;color:#666;white-space:nowrap;transform:scaleX(0.9320);transform-origin:0 0;">Help</div>
<div style="left:898px;top:58px;width:1px;height:84px;background:#e1e1e1;"></div>
<svg style="position:absolute;left:1112px;top:134px;" width="10" height="7" viewBox="0 0 10 7"><path d="M1,6 L5,2 L9,6" stroke="#666" stroke-width="1.6" fill="none"/></svg>
<div style="left:1px;top:53px;width:1129px;height:1px;background:#d5d5d5;"></div>
<div style="left:1px;top:29px;width:59px;height:25px;background:#217346;"></div>
<div style="left:21.00px;top:36px;font-size:12px;line-height:12px;font-weight:normal;color:#fff;white-space:nowrap;transform:scaleX(0.7892);transform-origin:0 0;">FILE</div>
<div style="left:78.00px;top:36px;font-size:12px;line-height:12px;font-weight:normal;color:#444;white-space:nowrap;transform:scaleX(0.9444);transform-origin:0 0;">HOME</div>
<div style="left:141.00px;top:36px;font-size:12px;line-height:12px;font-weight:normal;color:#444;white-space:nowrap;transform:scaleX(0.8678);transform-origin:0 0;">INSERT</div>
<div style="left:208.00px;top:36px;font-size:12px;line-height:12px;font-weight:normal;color:#444;white-space:nowrap;transform:scaleX(0.9287);transform-origin:0 0;">PAGE LAYOUT</div>
<div style="left:314.00px;top:36px;font-size:12px;line-height:12px;font-weight:normal;color:#444;white-space:nowrap;transform:scaleX(0.9149);transform-origin:0 0;">FORMULAS</div>
<div style="left:404.00px;top:36px;font-size:12px;line-height:12px;font-weight:normal;color:#444;white-space:nowrap;transform:scaleX(1.0257);transform-origin:0 0;">DATA</div>
<div style="left:464.00px;top:36px;font-size:12px;line-height:12px;font-weight:normal;color:#444;white-space:nowrap;transform:scaleX(0.8450);transform-origin:0 0;">REVIEW</div>
<div style="left:533.00px;top:36px;font-size:12px;line-height:12px;font-weight:normal;color:#444;white-space:nowrap;transform:scaleX(0.8804);transform-origin:0 0;">VIEW</div>
<div style="left:589.00px;top:36px;font-size:12px;line-height:12px;font-weight:normal;color:#444;white-space:nowrap;transform:scaleX(0.9415);transform-origin:0 0;">Process Runner</div>
<svg style="position:absolute;left:10px;top:60px;" width="33" height="33" viewBox="0 0 33 33">
<path d="M0.8,17 V0.8 H25.2 V4" stroke="#6d6d6d" stroke-width="1.6" fill="none"/>
<rect x="5.5" y="4.2" width="13" height="1.6" fill="#e8b462"/>
<path d="M2,8.8 H22" stroke="#c8c8c8" stroke-width="1.2"/>
<path d="M7.5,6 V9 M15,6 V9" stroke="#c8c8c8" stroke-width="1.2"/>
<path d="M15,24 Q15,14 20,14 L29,14 Q32,14 32,19 L32,26 L15,26 Z" fill="#6fa08a" stroke="#fff" stroke-width="1"/>
<circle cx="22.8" cy="9.7" r="5.2" fill="#6fa08a" stroke="#fff" stroke-width="1"/>
<path d="M20,14.5 L22.8,18 L25.6,14.5" fill="#fff"/>
<path d="M0.5,32 L0.5,25 Q0.5,20 5,20 L13.5,20 Q18,20 18,25 L18,32 Z" fill="#4a78b8" stroke="#fff" stroke-width="1"/>
<circle cx="9.2" cy="15.5" r="5.2" fill="#4a78b8" stroke="#fff" stroke-width="1"/>
<path d="M6.3,20.3 L9.2,24 L12.1,20.3" fill="#fff"/>
</svg>
<svg style="position:absolute;left:53px;top:60px;" width="33" height="33" viewBox="0 0 33 33">
<rect x="0.8" y="0.8" width="28.4" height="20.4" fill="#f3f3f3" stroke="#b4b4b4" stroke-width="1.6"/>
<path d="M1,8.8 H29 M1,14.6 H29 M11,6 V21 M19,6 V21" stroke="#c4c4c4" stroke-width="1.3"/>
<path d="M8,4.8 H22" stroke="#c4c4c4" stroke-width="1.3"/>
<polygon points="18.5,13.5 26.5,13.5 32.5,19.5 32.5,26.5 26.5,32.5 18.5,32.5 12.5,26.5 12.5,19.5" fill="#a9a9ab" stroke="#fff" stroke-width="1"/>
<path d="M22.5,29 V18 M18.5,22 L22.5,18 L26.5,22" stroke="#fff" stroke-width="1.8" fill="none"/>
</svg>
<svg style="position:absolute;left:101px;top:62px;" width="25" height="27" viewBox="0 0 25 27">
<rect x="0.8" y="0.8" width="22.4" height="24.4" fill="#f3f3f3" stroke="#b4b4b4" stroke-width="1.6"/>
<path d="M6,5 H17.5" stroke="#c4c4c4" stroke-width="1.3"/>
<path d="M6.5,13 A5.5,5.5 0 0 1 16.5,11" stroke="#bdbdbd" stroke-width="2" fill="none"/>
<path d="M17.5,16 A5.5,5.5 0 0 1 7.5,18" stroke="#bdbdbd" stroke-width="2" fill="none"/>
<polygon points="4,11 9,11 4,16" fill="#bdbdbd"/><polygon points="20,17 15,17 20,12" fill="#bdbdbd"/>
</svg>
<svg style="position:absolute;left:139px;top:60px;" width="16" height="16" viewBox="0 0 16 16">
<rect x="0.5" y="0.5" width="14" height="10" fill="#fff" stroke="#b8b8b8"/>
<path d="M0.5,3.5 H14.5 M0.5,6.5 H14.5 M5,1 V10 M9.5,1 V10" stroke="#b8b8b8"/>
<path d="M9,15.5 L12,10 L15,12 M11,11 L9,8" stroke="#a8a8a8" stroke-width="2" fill="none"/>
</svg>
<svg style="position:absolute;left:140px;top:83px;" width="14" height="16" viewBox="0 0 14 16">
<rect x="0.5" y="0.5" width="12" height="15" fill="#fff" stroke="#b8b8b8"/>
<path d="M2.5,3.5 H5.5 M7.5,3.5 H10.5 M2.5,6 H5.5 M7.5,6 H10.5 M2.5,8.5 H5.5 M7.5,8.5 H10.5 M2.5,11 H5.5 M7.5,11 H10.5" stroke="#b0b0b0" stroke-width="1.2"/>
</svg>
<svg style="position:absolute;left:138px;top:106px;" width="17" height="17" viewBox="0 0 17 17">
<path d="M5,1.5 H10 L13,4.5 V10" stroke="#b8b8b8" fill="#fff"/>
<path d="M3,12 V3 Q3,1 4.5,1 Q6,1 6,3 V9" stroke="#a8a8a8" stroke-width="1.4" fill="none"/>
<path d="M1,6 V10 Q1,13 3.5,13 Q6,13 6,10" stroke="#a8a8a8" stroke-width="1.4" fill="none"/>
<rect x="6.5" y="11.5" width="9" height="4" fill="#f0f0f0" stroke="#a8a8a8"/>
</svg>
<svg style="position:absolute;left:288px;top:60px;" width="16" height="16" viewBox="0 0 16 16">
<rect width="16" height="16" fill="#f3f3f3"/>
<rect x="1" y="1" width="3" height="3" fill="#b0b0b0"/><rect x="5" y="6" width="3" height="3" fill="#b0b0b0"/><rect x="5" y="11" width="3" height="3" fill="#b0b0b0"/>
<path d="M7,2.5 H14 M9.5,7.5 H15 M9.5,12.5 H15" stroke="#b0b0b0" stroke-width="1.2"/>
</svg>
<svg style="position:absolute;left:288px;top:83px;" width="16" height="16" viewBox="0 0 16 16">
<g fill="#b0b0b0"><circle cx="8" cy="8" r="5.6"/>
<rect x="6" y="0" width="4" height="16"/><rect x="0" y="6" width="16" height="4"/>
<rect x="6" y="0" width="4" height="16" transform="rotate(45 8 8)"/><rect x="6" y="0" width="4" height="16" transform="rotate(-45 8 8)"/></g>
<circle cx="8" cy="8" r="2.6" fill="#e8e8e8"/>
</svg>
<svg style="position:absolute;left:288px;top:106px;" width="17" height="16" viewBox="0 0 17 16">
<g fill="#b0b0b0"><circle cx="12" cy="3.5" r="2.8"/><path d="M7,11 Q7,7 10,7 H14 Q17,7 17,10 V13 H7 Z"/>
<circle cx="5" cy="7.5" r="2.8"/><path d="M0,15.5 V13.5 Q0,10.5 3,10.5 H7 Q10,10.5 10,13.5 V15.5 Z"/></g>
<path d="M3.5,11 L5,13 L6.5,11" fill="#fff"/><path d="M10.5,7.5 L12,9.5 L13.5,7.5" fill="#fff"/>
</svg>
<svg style="position:absolute;left:453px;top:60px;" width="16" height="16" viewBox="0 0 16 16">
<rect x="0.5" y="0.5" width="15" height="14" fill="#fff" stroke="#b4b4b4"/><rect x="0" y="0" width="16" height="3" fill="#b4b4b4"/>
<path d="M0.5,6 H15.5 M0.5,9 H15.5 M0.5,12 H15.5 M5.5,3 V15 M10.5,3 V15" stroke="#c8c8c8"/>
<rect x="6" y="7" width="4" height="9" fill="#dcdcdc"/>
<path d="M8,12 V4 M5.5,6.5 L8,4 L10.5,6.5" stroke="#a8a8a8" stroke-width="1.2" fill="none"/>
</svg>
<svg style="position:absolute;left:453px;top:83px;" width="16" height="16" viewBox="0 0 16 16">
<rect x="0.5" y="0.5" width="15" height="14" fill="#fff" stroke="#b4b4b4"/><rect x="0" y="0" width="16" height="3" fill="#b4b4b4"/>
<path d="M0.5,6 H15.5 M0.5,9 H15.5 M0.5,12 H15.5 M5.5,3 V15 M10.5,3 V15" stroke="#c8c8c8"/>
<rect x="10" y="6" width="6" height="6" fill="#dcdcdc"/>
<path d="M13,8.5 H4 M6.5,6 L4,8.5 L6.5,11" stroke="#a8a8a8" stroke-width="1.2" fill="none"/>
</svg>
<svg style="position:absolute;left:569px;top:60px;" width="17" height="14" viewBox="0 0 17 14">
<path d="M0,0.5 H11 M0,2.5 H11 M0,4.5 H6 M0,6.5 H6" stroke="#b4b4b4" stroke-width="1"/>
<path d="M16,9.5 H5 M9.5,5 L5,9.5 L9.5,14" stroke="#bcbcbc" stroke-width="2.2" fill="none"/>
</svg>
<svg style="position:absolute;left:569px;top:83px;" width="17" height="15" viewBox="0 0 17 15">
<path d="M5,0.5 H16 M5,2.5 H16 M10,4.5 H16 M10,6.5 H16" stroke="#b4b4b4" stroke-width="1"/>
<path d="M0,10 H11 M6.5,5.5 L11,10 L6.5,14.5" stroke="#bcbcbc" stroke-width="2.2" fill="none"/>
</svg>
<svg style="position:absolute;left:656px;top:60px;" width="28" height="33" viewBox="0 0 28 33">
<rect x="3.8" y="0.8" width="22.4" height="30.4" fill="#fff" stroke="#6d6d6d" stroke-width="1.6"/>
<g fill="#fff" stroke="#9a9a9a" stroke-width="0.8"><rect x="1.5" y="5" width="4" height="3"/><rect x="1.5" y="11" width="4" height="3"/><rect x="1.5" y="17" width="4" height="3"/><rect x="1.5" y="23" width="4" height="3"/></g>
<rect x="9.5" y="8.2" width="11.5" height="3.6" fill="#6fa08a"/>
</svg>
<svg style="position:absolute;left:701px;top:59px;" width="18" height="18" viewBox="0 0 18 18">
<circle cx="9" cy="9" r="8.3" fill="#3f74b9"/>
<path d="M6,6.8 Q6,3.8 9,3.8 Q12,3.8 12,6.6 Q12,8.4 9.8,9.4 Q9,9.9 9,11.2" stroke="#fff" stroke-width="1.7" fill="none"/>
<rect x="8.1" y="12.6" width="1.9" height="1.9" fill="#fff"/>
</svg>
<svg style="position:absolute;left:701px;top:82px;" width="18" height="17" viewBox="0 0 18 17"><path d="M3.375,4 H8.125 V6.376 Q10.5,7.779999999999999 10.5,10.48 V13.18 Q10.5,14.8 8.600000000000001,14.8 H2.9000000000000004 Q1,14.8 1,13.18 V10.48 Q1,7.779999999999999 3.375,6.376 Z" fill="#b8b8b8"/><path d="M10.55,1 H15.05 V2.87 Q17.3,3.9749999999999996 17.3,6.1 V8.225 Q17.3,9.5 15.5,9.5 H10.100000000000001 Q8.3,9.5 8.3,8.225 V6.1 Q8.3,3.9749999999999996 10.55,2.87 Z" fill="#bdbdbd"/><circle cx="5" cy="9" r="1" fill="#fff"/><circle cx="12.8" cy="5" r="1" fill="#fff"/><rect x="11" y="11" width="6" height="5" fill="#bdbdbd" stroke="#fff" stroke-width="0.8"/></svg>
<svg style="position:absolute;left:701px;top:105px;" width="18" height="17" viewBox="0 0 18 17"><path d="M3.375,4 H8.125 V6.529999999999999 Q10.5,8.024999999999999 10.5,10.899999999999999 V13.775 Q10.5,15.5 8.600000000000001,15.5 H2.9000000000000004 Q1,15.5 1,13.775 V10.899999999999999 Q1,8.024999999999999 3.375,6.529999999999999 Z" fill="#b8b8b8"/><path d="M10.55,1 H15.05 V3.2 Q17.3,4.5 17.3,7.0 V9.5 Q17.3,11 15.5,11 H10.100000000000001 Q8.3,11 8.3,9.5 V7.0 Q8.3,4.5 10.55,3.2 Z" fill="#bdbdbd"/><circle cx="5" cy="9" r="1" fill="#fff"/><circle cx="12.8" cy="5" r="1" fill="#fff"/></svg>
<div style="left:687px;top:53px;width:57px;height:1px;background:#fff;"></div>
<div style="left:699.00px;top:36px;font-size:12px;line-height:12px;font-weight:normal;color:#217346;white-space:nowrap;transform:scaleX(0.9600);transform-origin:0 0;">TEAM</div>
<svg style="position:absolute;left:200px;top:365px;" width="570" height="190" viewBox="0 0 570 190"><path d="M7,48 L57,48 L130.5,8.5 L93,48 L556,48 L556,180 L7,180 Z" fill="#ffffcc" stroke="#0000ff" stroke-width="2" stroke-linejoin="miter"/></svg>
<div style="left:219.00px;top:424px;font-size:16.5px;line-height:16.5px;font-weight:bold;color:#000;white-space:nowrap;transform:scaleX(1.0052);transform-origin:0 0;">In Sales Organization &#x27;0005&#x27; and Distribution Channel &#x27;12&#x27;, total</div>
<div style="left:219.00px;top:447px;font-size:16.5px;line-height:16.5px;font-weight:bold;color:#000;white-space:nowrap;transform:scaleX(0.9936);transform-origin:0 0;">available Tax Classification is 1 (as mentioned in the count</div>
<div style="left:219.00px;top:470px;font-size:16.5px;line-height:16.5px;font-weight:bold;color:#000;white-space:nowrap;transform:scaleX(1.0061);transform-origin:0 0;">column). But in Mapper there are 5 Tax Classification fields</div>
<div style="left:219.00px;top:493px;font-size:16.5px;line-height:16.5px;font-weight:bold;color:#000;white-space:nowrap;">mapped. Hence supression is required on rest of the 4 fields. We</div>
<div style="left:219.00px;top:516px;font-size:16.5px;line-height:16.5px;font-weight:bold;color:#000;white-space:nowrap;">will implement &quot;Z-Custom Dynamic Skip&quot; to supress these fields.</div>
<div style="left:1112px;top:236px;width:15px;height:324px;background:#f3f3f3;"></div>
<div style="left:1108px;top:212px;width:1px;height:363px;background:#ababab;"></div>
<div style="left:1112px;top:195px;width:13px;height:13px;border:1px solid #ababab;background:#fff;"></div>
<svg style="position:absolute;left:1115px;top:200px;" width="9" height="5" viewBox="0 0 9 5"><polygon points="0,5 9,5 4.5,0" fill="#777"/></svg>
<div style="left:1112px;top:210px;width:13px;height:24px;border:1px solid #ababab;background:#fff;"></div>
<div style="left:1112px;top:560px;width:13px;height:13px;border:1px solid #ababab;background:#fff;"></div>
<svg style="position:absolute;left:1115px;top:566px;" width="9" height="5" viewBox="0 0 9 5"><polygon points="0,0 9,0 4.5,5" fill="#777"/></svg>
<div style="left:1px;top:575px;width:1129px;height:27px;background:#f3f3f3;"></div>
<div style="left:1px;top:574px;width:1108px;height:1px;background:#c6c6c6;"></div>
<svg style="position:absolute;left:27px;top:584px;" width="6" height="9" viewBox="0 0 6 9"><polygon points="5,0 5,8 0,4" fill="#b8b8b8"/></svg>
<svg style="position:absolute;left:56px;top:584px;" width="6" height="9" viewBox="0 0 6 9"><polygon points="0,0 0,8 5,4" fill="#b8b8b8"/></svg>
<div style="left:101px;top:574px;width:91px;height:25px;background:#fff;"></div>
<div style="left:101px;top:574px;width:1px;height:25px;background:#c6c6c6;"></div>
<div style="left:191px;top:574px;width:1px;height:25px;background:#c6c6c6;"></div>
<div style="left:102px;top:574px;width:89px;height:1px;background:#fff;"></div>
<div style="left:101px;top:597px;width:91px;height:2px;background:#217346;"></div>
<div style="left:113.50px;top:581px;font-size:13px;line-height:13px;font-weight:bold;color:#217346;white-space:nowrap;">PivotTable</div>
<div style="left:204.00px;top:581px;font-size:13px;line-height:13px;font-weight:normal;color:#444;white-space:nowrap;transform:scaleX(0.9223);transform-origin:0 0;">Sheet1</div>
<div style="left:255px;top:578px;width:1px;height:20px;background:#c6c6c6;"></div>
<svg style="position:absolute;left:288px;top:579px;" width="19" height="19" viewBox="0 0 19 19"><circle cx="9.5" cy="9.5" r="8" fill="none" stroke="#777" stroke-width="1.3"/><path d="M9.5,5 V14 M5,9.5 H14" stroke="#666" stroke-width="2"/></svg>
<div style="left:678px;top:583px;width:2px;height:2px;background:#9c9c9c;"></div>
<div style="left:678px;top:587px;width:2px;height:2px;background:#9c9c9c;"></div>
<div style="left:678px;top:591px;width:2px;height:2px;background:#9c9c9c;"></div>
<div style="left:695px;top:581px;width:13px;height:13px;border:1px solid #ababab;background:#fff;"></div>
<svg style="position:absolute;left:699px;top:584px;" width="5" height="9" viewBox="0 0 5 9"><polygon points="5,0 5,9 0,4.5" fill="#777"/></svg>
<div style="left:709px;top:581px;width:368px;height:13px;border:1px solid #ababab;background:#fff;"></div>
<div style="left:710px;top:582px;width:1px;height:13px;background:#ababab;"></div>
<div style="left:1079px;top:581px;width:15px;height:15px;background:#e6e6e6;"></div>
<div style="left:1094px;top:581px;width:13px;height:13px;border:1px solid #ababab;background:#fff;"></div>
<svg style="position:absolute;left:1100px;top:584px;" width="5" height="9" viewBox="0 0 5 9"><polygon points="0,0 0,9 5,4.5" fill="#777"/></svg>
<div style="left:0px;top:602px;width:1131px;height:23px;background:#217346;"></div>
<div style="left:8.00px;top:607px;font-size:12px;line-height:12px;font-weight:normal;color:#fff;white-space:nowrap;transform:scaleX(0.7981);transform-origin:0 0;">READY</div>
<div style="left:827px;top:602px;width:37px;height:21px;background:#0e5c2f;"></div>
<svg style="position:absolute;left:839px;top:606px;" width="13" height="13" viewBox="0 0 13 13"><rect x="0.5" y="0.5" width="12" height="12" fill="none" stroke="#fff"/><path d="M4.5,0 V13 M8.5,0 V13 M0,4.5 H13 M0,8.5 H13" stroke="#fff"/></svg>
<svg style="position:absolute;left:877px;top:606px;" width="15" height="14" viewBox="0 0 15 14"><rect x="0.5" y="0.5" width="14" height="13" fill="none" stroke="#fff"/><rect x="3.5" y="2.5" width="8" height="9" fill="none" stroke="#fff"/><path d="M5,4.5 H10 M5,6.5 H10 M5,8.5 H10" stroke="#fff" stroke-width="1"/></svg>
<svg style="position:absolute;left:915px;top:606px;" width="15" height="14" viewBox="0 0 15 14"><rect x="0.5" y="0.5" width="14" height="13" fill="none" stroke="#fff"/><rect x="1" y="1" width="4" height="8" fill="#e6ece8"/><rect x="7" y="1" width="4" height="7" fill="#e6ece8"/></svg>
<div style="left:946px;top:612px;width:6px;height:2px;background:#fff;"></div>
<div style="left:956px;top:612px;width:100px;height:1px;background:#fff;"></div>
<div style="left:1004px;top:607px;width:4px;height:11px;background:#fff;"></div>
<div style="left:1060px;top:612px;width:9px;height:2px;background:#fff;"></div>
<div style="left:1063px;top:609px;width:3px;height:9px;background:#fff;"></div>
<div style="left:1083.00px;top:607px;font-size:12px;line-height:12px;font-weight:normal;color:#fff;white-space:nowrap;transform:scaleX(0.8798);transform-origin:0 0;">100%</div>
</body></html>
